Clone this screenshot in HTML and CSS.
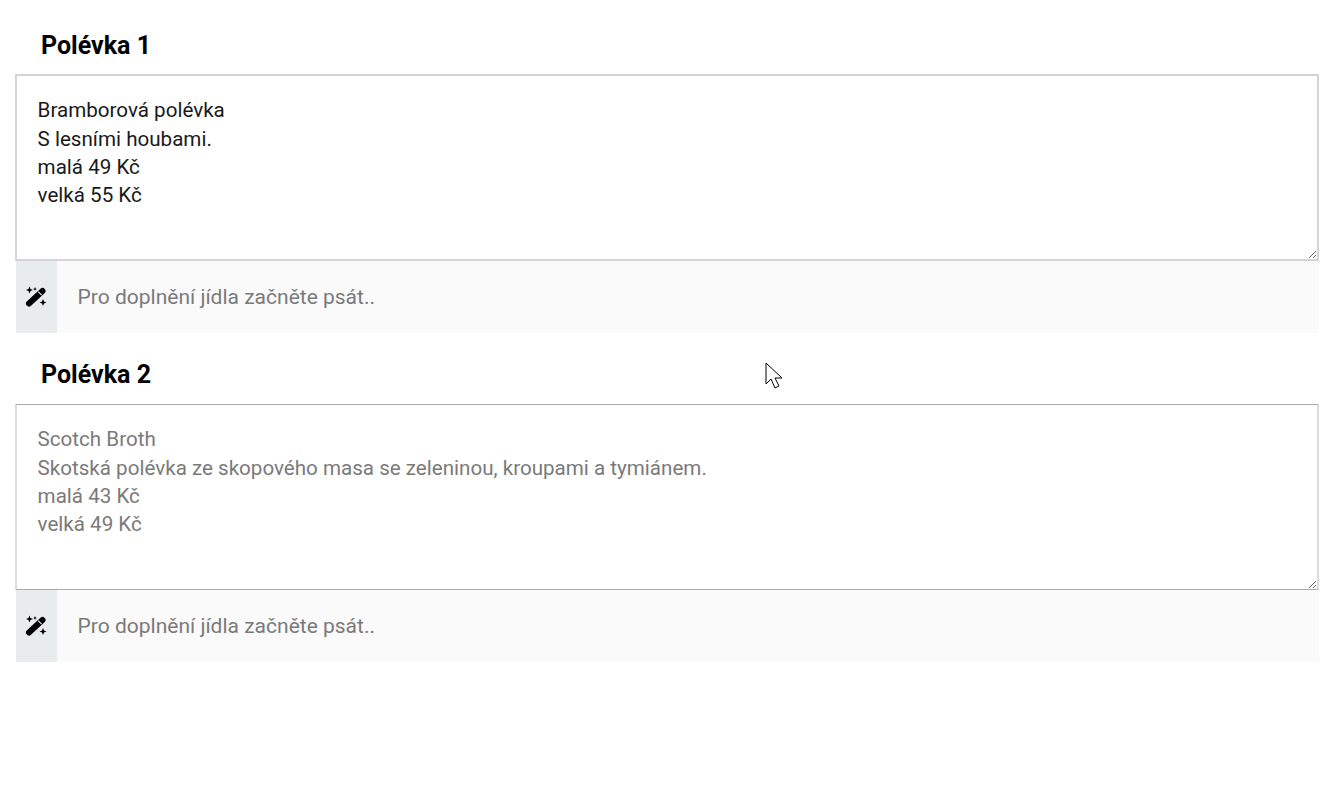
FILE: index.html
```html
<!DOCTYPE html>
<html lang="en">

<head>
    <meta charset="UTF-8">
    <meta name="viewport" content="width=device-width, initial-scale=1.0">
    <title>Polévky</title>
    <link rel="stylesheet" href="styles.css">
</head>

<body>
    <div class="container">
        <div class="soup">
            <h2>Polévka 1</h2>
            <textarea class="meal meal-filled">Bramborová polévka
S lesními houbami.
malá 49 Kč
velká 55 Kč</textarea>
            <div class="search-row">
                <span class="search-icon">
                    <svg viewBox="0 0 24 24" width="24" height="24"><path d="M5 18.5 18.5 6" stroke="#000" stroke-width="6" stroke-linecap="round"/><path d="M14.2 6.6l3.4 3.6" stroke="#e9eced" stroke-width="1.2"/><path d="M5.5 1.5 6.5 4l2.5 1-2.5 1-1 2.5-1-2.5-2.5-1 2.5-1zM11 2l.6 1.4 1.4.6-1.4.6-.6 1.4-.6-1.4L9 4l1.4-.6zM19 14l1 2.5 2.5 1-2.5 1-1 2.5-1-2.5-2.5-1 2.5-1z"/></svg>
                </span>
                <input class="search-input" type="text" placeholder="Pro doplnění jídla začněte psát..">
            </div>
        </div>

        <div class="soup">
            <h2>Polévka 2</h2>
            <textarea class="meal" placeholder="Scotch Broth
Skotská polévka ze skopového masa se zeleninou, kroupami a tymiánem.
malá 43 Kč
velká 49 Kč"></textarea>
            <div class="search-row">
                <span class="search-icon">
                    <svg viewBox="0 0 24 24" width="24" height="24"><path d="M5 18.5 18.5 6" stroke="#000" stroke-width="6" stroke-linecap="round"/><path d="M14.2 6.6l3.4 3.6" stroke="#e9eced" stroke-width="1.2"/><path d="M5.5 1.5 6.5 4l2.5 1-2.5 1-1 2.5-1-2.5-2.5-1 2.5-1zM11 2l.6 1.4 1.4.6-1.4.6-.6 1.4-.6-1.4L9 4l1.4-.6zM19 14l1 2.5 2.5 1-2.5 1-1 2.5-1-2.5-2.5-1 2.5-1z"/></svg>
                </span>
                <input class="search-input" type="text" placeholder="Pro doplnění jídla začněte psát..">
            </div>
        </div>
    </div>

    <svg class="cursor" viewBox="0 0 20 28" width="20" height="28"><path d="M1 1v21l5-5 4 9 4-2-4-8h7z" fill="#fff" stroke="#000" stroke-width="1"/></svg>
</body>

</html>
```

FILE: styles.css
```css
* {
    margin: 0;
    padding: 0;
    box-sizing: border-box;
}

body {
    font-family: 'Roboto', sans-serif;
    background: #fff;
    color: #000;
}

.container {
    padding: 28px 12px 0 16px;
}

.soup {
    margin-bottom: 24px;
}

h2 {
    font-size: 25px;
    font-weight: 700;
    line-height: 36px;
    margin-left: 25px;
    margin-bottom: 11px;
}

.meal {
    display: block;
    width: calc(100% + 1px);
    height: 186px;
    padding: 20.1px 20.6px;
    border: 1px solid #aaa;
    border-left: 2px solid #dcdcdc;
    border-right: 2px solid #dcdcdc;
    margin-left: -1px;
    font-family: 'Roboto', sans-serif;
    font-size: 20.6px;
    line-height: 28.4px;
    color: #1a1a1a;
    background: #fff;
    outline: none;
}

.meal-filled {
    border: 2px solid #d4d4d4;
    margin-top: -1px;
    height: 187px;
}

.meal::placeholder {
    color: #7a7a7a;
    opacity: 1;
}

.search-row {
    display: flex;
    height: 72px;
    background: #fafafa;
}

.search-icon {
    width: 41px;
    display: flex;
    align-items: center;
    justify-content: center;
    background: #e9eced;
}

.search-icon svg {
    margin-left: -1px;
}

.search-input {
    flex: 1;
    border: none;
    background: transparent;
    padding-left: 20.6px;
    padding-bottom: 1px;
    font-family: 'Roboto', sans-serif;
    font-size: 21px;
    outline: none;
}

.search-input::placeholder {
    color: #7a7a7a;
    opacity: 1;
}

.cursor {
    position: absolute;
    left: 765px;
    top: 362px;
}
```
